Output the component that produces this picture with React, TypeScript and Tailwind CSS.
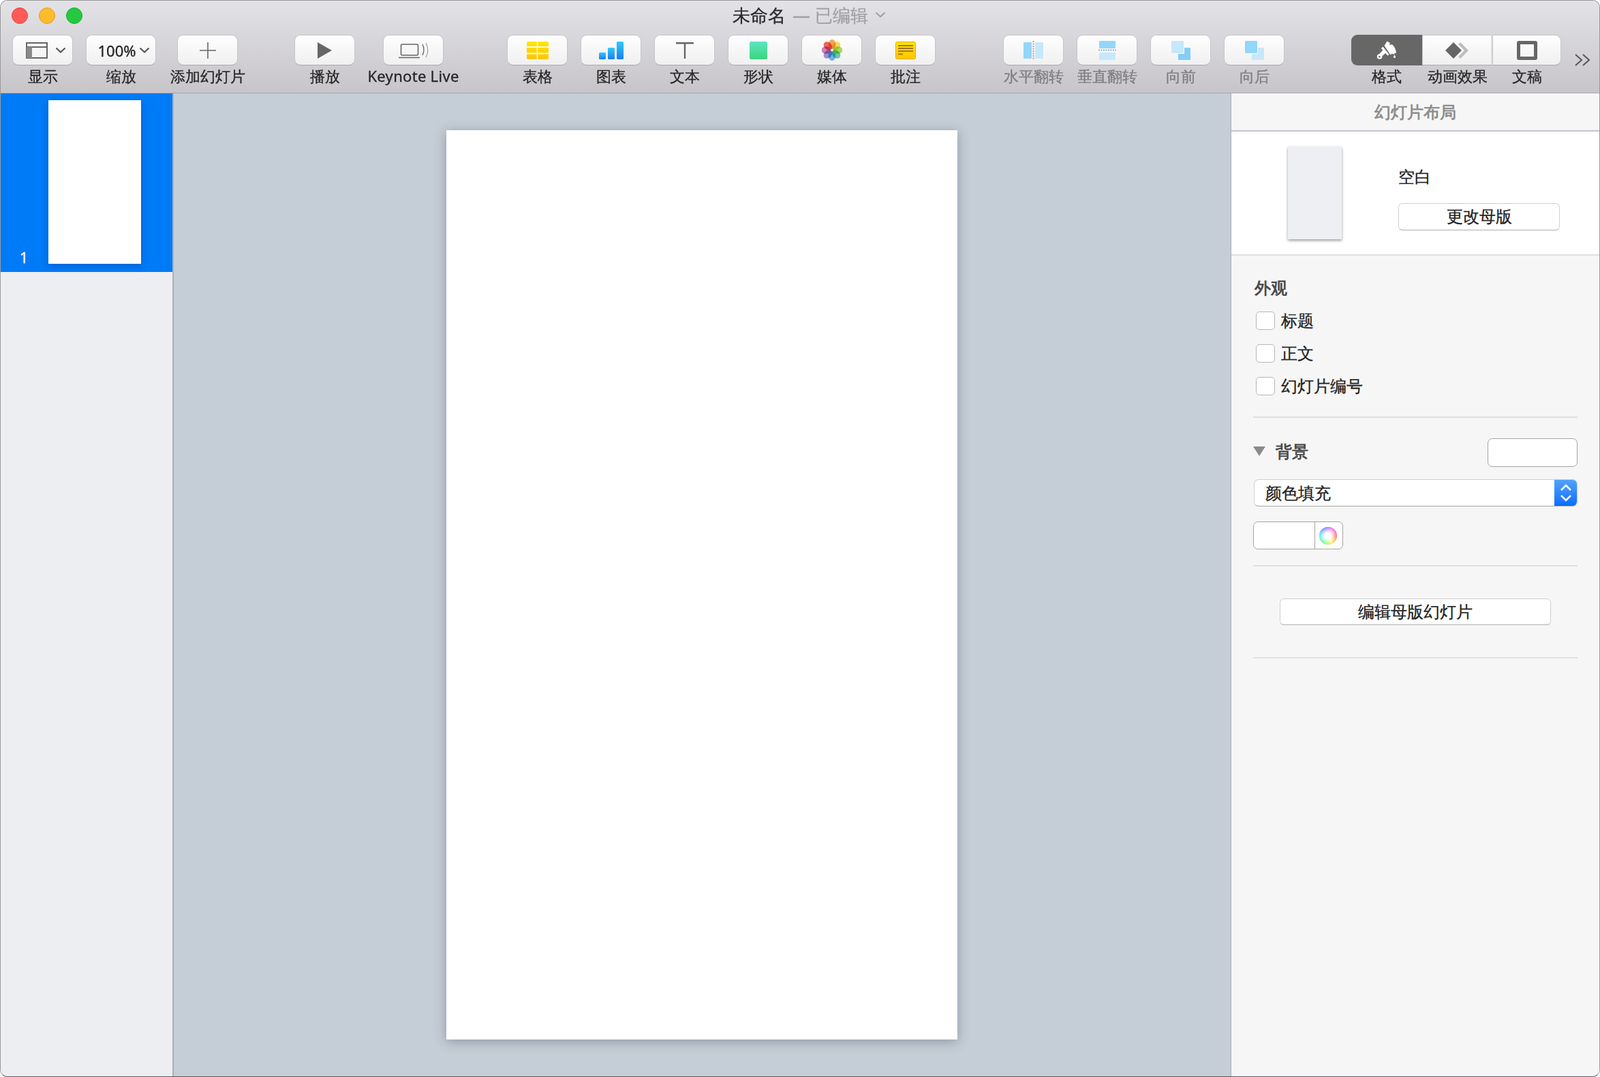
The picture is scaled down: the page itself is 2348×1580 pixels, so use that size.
import type { ReactNode } from "react";

const buttonSkin =
	"border border-[#c6c5c8] border-b-[#a9a8ac] bg-gradient-to-b from-[#fefefe] to-[#f0f0f0]";

function ToolItem({
	label,
	disabled,
	wide,
	className = "",
	children,
}: {
	label: string;
	disabled?: boolean;
	wide?: boolean;
	className?: string;
	children: ReactNode;
}) {
	return (
		<div className={`flex flex-col items-center ${wide ? "w-[103px]" : "w-[89px]"} ${className}`}>
			<div className={`flex h-[45px] w-full items-center justify-center rounded-[9px] ${buttonSkin}`}>
				{children}
			</div>
			<span
				className={`mt-[1px] whitespace-nowrap text-[22px] leading-[28px] ${disabled ? "text-[#7f7d80]" : "text-[#262626]"}`}
			>
				{label}
			</span>
		</div>
	);
}

function Chevron({ className = "" }: { className?: string }) {
	return (
		<svg width="16" height="9" viewBox="0 0 16 9" fill="none" className={className}>
			<path d="M1.5 1.5 8 7.5l6.5-6" stroke="currentColor" strokeWidth="2.2" />
		</svg>
	);
}

function ViewIcon() {
	return (
		<svg width="32" height="24" viewBox="0 0 32 24" className="ml-[9px]">
			<rect x="1" y="1" width="30" height="22" fill="none" stroke="#666" strokeWidth="2" />
			<path d="M1 7h30" stroke="#666" strokeWidth="2" />
			<rect x="1" y="7" width="8" height="16" fill="#8a8a8a" />
		</svg>
	);
}

function PlusIcon() {
	return (
		<svg width="24" height="24" viewBox="0 0 24 24">
			<path d="M12 0v24M0 12h24" stroke="#666" strokeWidth="1.6" />
		</svg>
	);
}

function PlayIcon() {
	return (
		<svg width="21" height="24" viewBox="0 0 21 24">
			<path d="M0 0l21 12L0 24z" fill="#666" />
		</svg>
	);
}

function LiveIcon() {
	return (
		<svg width="45" height="24" viewBox="0 0 45 24" fill="none" stroke="#666" className="ml-[2px]">
			<rect x="3.500" y="3" width="25" height="16" rx="2" strokeWidth="1.6" />
			<path d="M0 22.500h31" strokeWidth="1.6" />
			<path d="M35 3c2.500 5 2.500 11 0 16" strokeWidth="1.4" />
			<path d="M40 1c3.500 7 3.500 15 0 21" strokeWidth="1.2" stroke="#999" />
		</svg>
	);
}

function TableIcon() {
	return (
		<svg width="32" height="26" viewBox="0 0 32 26">
			<defs>
				<linearGradient id="tableFill" x1="0" y1="0" x2="0" y2="1">
					<stop offset="0" stopColor="#ffe600" />
					<stop offset="1" stopColor="#ffc400" />
				</linearGradient>
			</defs>
			<rect width="32" height="26" rx="2" fill="url(#tableFill)" />
			<path d="M15.500 0v26M0 8h32M0 17.500h32" stroke="#fff" strokeWidth="1.8" opacity="0.85" />
		</svg>
	);
}

function ChartIcon() {
	return (
		<svg width="36" height="26" viewBox="0 0 36 26">
			<defs>
				<linearGradient id="barFill" x1="0" y1="0" x2="0" y2="1">
					<stop offset="0" stopColor="#35c8f9" />
					<stop offset="1" stopColor="#1a7ff0" />
				</linearGradient>
			</defs>
			<rect x="0" y="16" width="10" height="10" rx="1.5" fill="url(#barFill)" />
			<rect x="13" y="9" width="10" height="17" rx="1.5" fill="url(#barFill)" />
			<rect x="26" y="0" width="10" height="26" rx="1.5" fill="url(#barFill)" />
		</svg>
	);
}

function TextIcon() {
	return (
		<svg width="26" height="24" viewBox="0 0 26 24">
			<path d="M0 1.200h26M13 1.200V24" stroke="#666" strokeWidth="2.4" fill="none" />
		</svg>
	);
}

function MediaIcon() {
	const petals = ["#f59a3e", "#f7d84a", "#a3d94a", "#58c9a0", "#5fb0f0", "#8d87cf", "#cb6fb6", "#ee4a4a"];
	return (
		<svg width="30" height="31" viewBox="-15 -15.5 30 31">
			{petals.map((color, i) => (
				<ellipse
					key={color}
					cx="0"
					cy="-8.6"
					rx="5.4"
					ry="7"
					fill={color}
					opacity="0.85"
					transform={`rotate(${i * 45})`}
					className="mix-blend-multiply"
				/>
			))}
			<circle r="1" fill="#fff" />
		</svg>
	);
}

function NoteIcon() {
	return (
		<svg width="30" height="26" viewBox="0 0 30 26">
			<defs>
				<linearGradient id="noteFill" x1="0" y1="0" x2="0" y2="1">
					<stop offset="0" stopColor="#ffe600" />
					<stop offset="1" stopColor="#ffc400" />
				</linearGradient>
			</defs>
			<rect x="0.5" y="0.5" width="29" height="25" rx="2" fill="url(#noteFill)" stroke="#e6ac00" />
			<path d="M4 6h22M4 10h22M4 14h22M4 18.500h7" stroke="#a5771c" strokeWidth="2" />
		</svg>
	);
}

function FlipHorizontalIcon() {
	return (
		<svg width="30" height="28" viewBox="0 0 30 28">
			<rect x="0" y="2" width="12" height="24" rx="1" fill="#92d6f9" />
			<rect x="17" y="2" width="12" height="24" rx="1" fill="#c6e8fb" />
			<path d="M14.500 0v28" stroke="#a8a8a8" strokeWidth="2" strokeDasharray="2 1.5" />
		</svg>
	);
}

function FlipVerticalIcon() {
	return (
		<svg width="26" height="28" viewBox="0 0 26 28">
			<rect x="1" y="0" width="24" height="11" rx="1" fill="#92d6f9" />
			<rect x="1" y="17" width="24" height="11" rx="1" fill="#c6e8fb" />
			<path d="M0 13.500h26" stroke="#a8a8a8" strokeWidth="2" strokeDasharray="2 1.5" />
		</svg>
	);
}

function ArrangeIcon({ front }: { front: boolean }) {
	return (
		<svg width="28" height="28" viewBox="0 0 28 28">
			<rect x="10" y="10" width="18" height="18" rx="1" fill={front ? "#c6e8fb" : "#85cdf6"} />
			<rect x="0" y="0" width="19" height="19" rx="1" fill="#fafafa" />
			<rect x="0" y="0" width="18" height="18" rx="1" fill={front ? "#92d6f9" : "#c6e8fb"} />
		</svg>
	);
}

function BrushIcon() {
	return (
		<svg width="30" height="27" viewBox="0 0 30 27" fill="#fff">
			{/* bristles */}
			<path d="M11.500 7 15.500.5 19.800 3l-1 2.800L23 5.200C26.500 8 28.500 13 29 18l-2-.5-1 2.200-3.500-1L20.500 20.500z" />
			{/* ferrule */}
			<path d="M9.500 8.500 18.500 20l-2.200 1.600L6.800 10.800z" />
			{/* handle with hanging hole */}
			<path d="M10 12.700 14 17.200 7 23.500 3.500 20z" />
			<circle cx="4.600" cy="23" r="3.800" />
			<circle cx="4.400" cy="23.200" r="1.300" fill="#676767" />
			{/* drip */}
			<path d="M26.500 20.500c1 1.500 1.600 2.300 1.600 3a1.600 1.600 0 0 1-3.200 0c0-.7.600-1.500 1.600-3z" />
		</svg>
	);
}

function BuildIcon() {
	return (
		<svg width="34" height="24" viewBox="0 0 34 24">
			<path d="M22 0l12 12-12 12-3-3 9-9-9-9z" fill="#bdbdbd" />
			<path d="M12 0l12 12-12 12L0 12z" fill="#666" />
		</svg>
	);
}

function DocumentIcon() {
	return <div className="h-[28px] w-[30px] rounded-[3px] border-[5px] border-[#666]" />;
}

function Checkbox({ label }: { label: string }) {
	return (
		<div className="flex h-[48px] items-center pl-[4px]">
			<div className="h-[27px] w-[28px] rounded-[5px] border border-[#b8b8b8] bg-white" />
			<span className="ml-[9px] text-[24px] leading-[32px] text-[#222]">{label}</span>
		</div>
	);
}

const segments = [
	{ label: "格式", width: "w-[104px]", skin: "rounded-l-[9px] bg-[#676767]", icon: <BrushIcon /> },
	{ label: "动画效果", width: "w-[103px]", skin: `border-r-2 border-r-[#dcdcdc] ${buttonSkin}`, icon: <BuildIcon /> },
	{ label: "文稿", width: "w-[101px]", skin: `rounded-r-[9px] ${buttonSkin}`, icon: <DocumentIcon /> },
];

export default function App() {
	return (
		<div className="h-[1580px] w-[2348px] bg-white [-webkit-text-stroke-width:0.3px] [font-family:'Liberation_Sans','Noto_Sans_CJK_SC',sans-serif]">
			<div className="flex h-full flex-col overflow-hidden rounded-[11px] border border-[#9a9a9a] border-b-[#55585c]">
				{/* toolbar */}
				<div className="h-[136px] shrink-0 border-b border-[#a9a9ab] bg-gradient-to-b from-[#e3e2e6] to-[#c7c5ca]">
					<div className="flex h-[50px] items-center pb-[7px] pl-[16px]">
						<div className="flex gap-[16px]">
							<div className="h-[24px] w-[24px] rounded-full border border-[#e2463f] bg-[#fc5b57]" />
							<div className="h-[24px] w-[24px] rounded-full border border-[#e1a116] bg-[#fdbb2e]" />
							<div className="h-[24px] w-[24px] rounded-full border border-[#14ae29] bg-[#26c83f]" />
						</div>
						<div className="mb-[2px] ml-[954px] flex items-center whitespace-nowrap text-[26px] leading-[32px]">
							<span className="text-[#2a2a2a]">未命名</span>
							<span className="ml-[10px] text-[#a3a2a5]">— 已编辑</span>
							<Chevron className="ml-[10px] text-[#a3a2a5]" />
						</div>
					</div>
					<div className="flex pl-[17px]">
						<ToolItem label="显示">
							<ViewIcon />
							<Chevron className="ml-[11px] text-[#555]" />
						</ToolItem>
						<ToolItem label="缩放" wide className="ml-[19px]">
							<span className="ml-[8px] text-[22px] leading-none text-[#222]">100%</span>
							<Chevron className="ml-[4px] text-[#555]" />
						</ToolItem>
						<ToolItem label="添加幻灯片" className="ml-[31px]">
							<PlusIcon />
						</ToolItem>
						<ToolItem label="播放" className="ml-[83px]">
							<PlayIcon />
						</ToolItem>
						<ToolItem label="Keynote Live" className="ml-[41px] tracking-[0.3px]">
							<LiveIcon />
						</ToolItem>
						<div className="ml-[93px] flex gap-[19px]">
							<ToolItem label="表格">
								<TableIcon />
							</ToolItem>
							<ToolItem label="图表">
								<ChartIcon />
							</ToolItem>
							<ToolItem label="文本">
								<TextIcon />
							</ToolItem>
							<ToolItem label="形状">
								<div className="h-[26px] w-[26px] rounded-[2px] bg-gradient-to-b from-[#5fe3c4] to-[#37d67a]" />
							</ToolItem>
							<ToolItem label="媒体">
								<MediaIcon />
							</ToolItem>
							<ToolItem label="批注">
								<NoteIcon />
							</ToolItem>
						</div>
						<div className="ml-[99px] flex gap-[19px]">
							<ToolItem label="水平翻转" disabled>
								<FlipHorizontalIcon />
							</ToolItem>
							<ToolItem label="垂直翻转" disabled>
								<FlipVerticalIcon />
							</ToolItem>
							<ToolItem label="向前" disabled>
								<ArrangeIcon front={false} />
							</ToolItem>
							<ToolItem label="向后" disabled>
								<ArrangeIcon front />
							</ToolItem>
						</div>
						<div className="ml-[98px] flex">
							{segments.map((seg) => (
								<div key={seg.label} className={`flex flex-col items-center ${seg.width}`}>
									<div className={`flex h-[45px] w-full items-center justify-center ${seg.skin}`}>
										{seg.icon}
									</div>
									<span className="mt-[1px] whitespace-nowrap text-[22px] leading-[28px] text-[#262626]">
										{seg.label}
									</span>
								</div>
							))}
						</div>
						<svg width="22" height="18" viewBox="0 0 22 18" fill="none" stroke="#555" strokeWidth="2" className="ml-[20px] mt-[28px]">
							<path d="M1 1l9 8-9 8M12 1l9 8-9 8" />
						</svg>
					</div>
				</div>

				<div className="flex min-h-0 flex-1">
					{/* slide navigator */}
					<div className="w-[254px] shrink-0 border-r-2 border-[#aeb0b3] bg-[#edeef1]">
						<div className="relative h-[262px] bg-[#007bf7] pl-[70px] pt-[10px]">
							<div className="h-[240px] w-[136px] bg-white shadow-[0_3px_10px_rgba(0,50,130,0.35)]" />
							<span className="absolute bottom-[9px] left-[28px] text-[21px] leading-[24px] text-white">1</span>
						</div>
					</div>

					{/* canvas */}
					<div className="flex-1 bg-[#c5cdd6] pl-[400px] pt-[54px]">
						<div className="h-[1334px] w-[750px] bg-white shadow-[0_3px_16px_rgba(60,72,90,0.4)]" />
					</div>

					{/* inspector */}
					<div className="w-[541px] shrink-0 border-l border-[#a9adb2] bg-[#f6f6f6]">
						<div className="flex h-[56px] items-center justify-center border-b-2 border-[#c0c5cb] text-[24px] font-semibold text-[#8e8e8e] [-webkit-text-stroke-width:0px]">
							幻灯片布局
						</div>
						<div className="flex h-[182px] border-b-2 border-[#e0e0e0] bg-white pl-[83px] pt-[22px]">
							<div className="h-[136px] w-[79px] bg-[#eeeff3] shadow-[0_2px_4px_rgba(0,0,0,0.4)]" />
							<div className="ml-[83px] w-[237px] pt-[28px]">
								<div className="text-[24px] leading-[32px] text-[#222]">空白</div>
								<div className="mt-[23px] flex h-[40px] items-center justify-center rounded-[6px] border border-[#d0d0d0] border-b-[#b0b0b0] bg-white pb-[2px] text-[24px] text-[#222]">
									更改母版
								</div>
							</div>
						</div>
						<div className="px-[32px] pt-[32px]">
							<div className="pl-[2px] text-[24px] font-semibold leading-[30px] text-[#4a4a4a] [-webkit-text-stroke-width:0px]">外观</div>
							<div className="mt-[9px]">
								<Checkbox label="标题" />
								<Checkbox label="正文" />
								<Checkbox label="幻灯片编号" />
							</div>
							<div className="mt-[21px] h-[2px] bg-[#e0e0e0]" />

							<div className="mt-[30px] flex h-[42px] items-center justify-between">
								<div className="flex items-center pb-[5px]">
									<svg width="18" height="14" viewBox="0 0 18 14">
										<path d="M0 0h18L9 14z" fill="#8a8a8a" />
									</svg>
									<span className="ml-[15px] text-[24px] font-semibold leading-[30px] text-[#4a4a4a] [-webkit-text-stroke-width:0px]">背景</span>
								</div>
								<div className="h-[42px] w-[132px] rounded-[7px] border border-[#a5a5a5] bg-white" />
							</div>
							<div className="ml-[1px] mt-[18px] flex h-[40px] w-[475px] overflow-hidden rounded-[7px] border border-[#d0d0d0] border-b-[#a8a8a8] bg-white">
								<span className="flex-1 pl-[16px] text-[24px] leading-[38px] text-[#222]">颜色填充</span>
								<div className="flex w-[33px] items-center justify-center bg-gradient-to-b from-[#4fa2ff] to-[#0a6cff]">
									<svg width="18" height="30" viewBox="0 0 18 30" fill="none" stroke="#fff" strokeWidth="2.6">
										<path d="M2 11l7-7 7 7M2 19l7 7 7-7" />
									</svg>
								</div>
							</div>
							<div className="mt-[22px] flex h-[41px] w-[132px] overflow-hidden rounded-[7px] border border-[#a5a5a5] bg-white">
								<div className="w-[90px] border-r border-[#a5a5a5]" />
								<div className="flex flex-1 items-center justify-center pr-[3px]">
									<div className="h-[26px] w-[26px] rounded-full bg-[conic-gradient(from_90deg,#ff2d20,#ffe600,#22ff44,#14e0ff,#3048ff,#ff20ea,#ff2d20)]">
										<div className="h-full w-full rounded-full bg-[radial-gradient(circle,#ffffff_25%,rgba(255,255,255,0)_95%)]" />
									</div>
								</div>
							</div>
							<div className="mt-[23px] h-[2px] bg-[#e0e0e0]" />

							<div className="ml-[39px] mt-[47px] flex h-[39px] w-[398px] items-center justify-center rounded-[6px] border border-[#d0d0d0] border-b-[#b0b0b0] bg-white pb-[2px] text-[24px] text-[#222]">
								编辑母版幻灯片
							</div>
							<div className="mt-[47px] h-[2px] bg-[#e0e0e0]" />
						</div>
					</div>
				</div>
			</div>
		</div>
	);
}
